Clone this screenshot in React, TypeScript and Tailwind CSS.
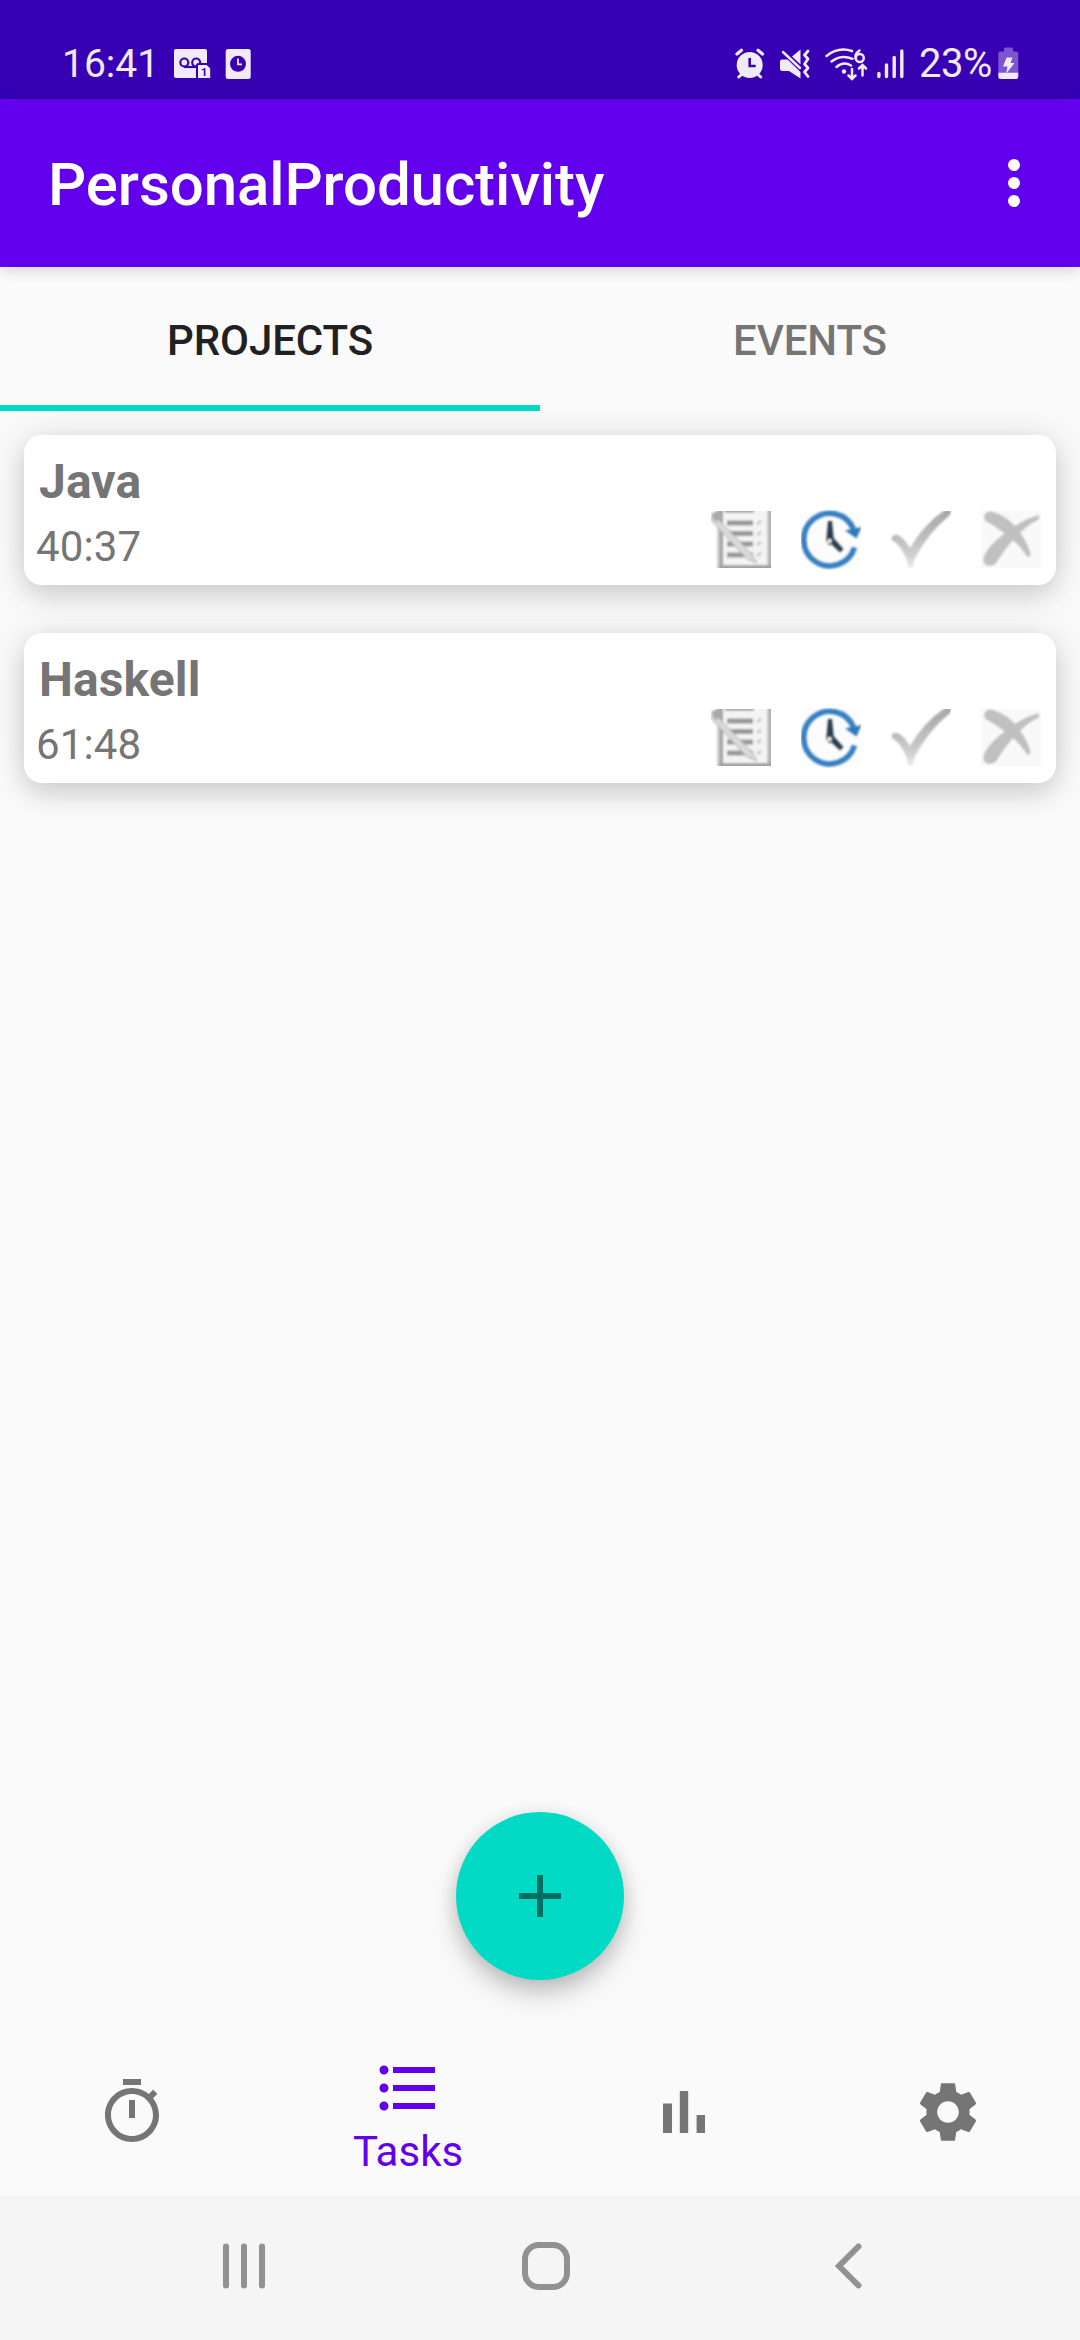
import type { ReactNode } from "react";

const LIGHT = "#f1eafc";
const DARK = "#3700b3";

function StatusBar() {
  return (
    <div className="flex h-[99px] shrink-0 items-start bg-[#3700b3] text-[#f1eafc]">
      <div className="ml-[62px] mt-[40px] w-[112px] text-[39px] leading-[48px]">16:41</div>
      <svg className="mt-[48px]" width="37" height="32" viewBox="0 -1 37 32">
        <rect width="33" height="29" rx="2" fill={LIGHT} />
        <g fill="none" stroke={DARK} strokeWidth="2.2">
          <circle cx="10.3" cy="13.5" r="4" />
          <circle cx="22.2" cy="13.5" r="4" />
          <path d="M10 18h13" />
        </g>
        <path d="M24 15h8.500l4.500 4v11H23V16z" fill={LIGHT} stroke={DARK} strokeWidth="2" />
        <rect x="33.200" y="-1" width="4" height="14" fill={DARK} />
        <path d="M24.500 16h8l3.700 3.500V29H24.500z" fill={LIGHT} />
        <text x="27" y="26.500" fontSize="11" fontWeight="700" fontFamily="Roboto" fill={DARK}>1</text>
      </svg>
      <svg className="ml-[14px] mt-[48px]" width="26" height="32" viewBox="0 -1 26 32">
        <rect x="0.700" width="25" height="30" rx="2.500" fill={LIGHT} />
        <circle cx="13" cy="14.800" r="8" fill={DARK} />
        <path d="M13 9.500v5.800h4" fill="none" stroke={LIGHT} strokeWidth="1.800" />
      </svg>
      <svg className="ml-[484px] mt-[48px]" width="30" height="31" viewBox="0 0 30 31">
        <g stroke={LIGHT} strokeLinecap="round" fill="none">
          <path d="M2 6l4.500-3.800M27.500 6l-4.500-3.800" strokeWidth="3.200" />
          <path d="M7 26l-3.200 3M22.500 26l3.200 3" strokeWidth="3" />
        </g>
        <circle cx="14.700" cy="17" r="13" fill={LIGHT} />
        <path d="M14.700 10v8h6" fill="none" stroke={DARK} strokeWidth="2.600" />
      </svg>
      <svg className="ml-[15px] mt-[48px]" width="31" height="32" viewBox="0 0 31 32">
        <path d="M0 13.500q0-2 2-2h5.500L20.500 24v6.500L9 23H2q-2 0-2-2z" fill={LIGHT} />
        <path d="M12 8.500L20.500 1.500v15z" fill={LIGHT} />
        <path d="M3 4L20 20" stroke={LIGHT} strokeWidth="2.500" strokeLinecap="round" />
        <path d="M28 3l-3.500 4 3.500 4-3.500 5 3.500 4-3.500 4 3.500 4.500" fill="none" stroke={LIGHT} strokeWidth="2.800" strokeLinecap="round" strokeLinejoin="round" />
      </svg>
      <svg className="ml-[14px] mt-[46px]" width="43" height="36" viewBox="0 0 43 36">
        <g fill="none" stroke={LIGHT} strokeWidth="2.500" strokeLinecap="round">
          <path d="M1.500 10Q13 .5 27 5" />
          <path d="M6.500 15.500Q16 8 27.500 12.800" />
          <path d="M11.500 21Q18.500 15 26 19.500" />
          <path d="M34.500 4.500Q29.500 8 30.600 12.500" />
          <circle cx="34.800" cy="12" r="4" />
          <path d="M27 23v9.500M23.500 29.500l3.500 3.500 3.500-3.500M37.500 29.500v-9.500M34 22.500l3.500-3.500 3.500 3.500" />
        </g>
        <circle cx="19" cy="25.500" r="2.200" fill={LIGHT} />
      </svg>
      <svg className="ml-[9px] mt-[48px]" width="28" height="31" viewBox="0 0 28 31">
        <path d="M1.900 25.500v3M9.500 17v11.500M17.200 9.500v19M24.800 3v25.500" stroke={LIGHT} strokeWidth="3.400" strokeLinecap="round" />
      </svg>
      <div className="ml-[14px] mt-[40px] w-[79px] text-[40px] leading-[48px] tracking-[-0.5px]">23%</div>
      <svg className="mt-[46px]" width="21" height="33" viewBox="0 0 21 33">
        <path d="M6 5.500V3q0-1.500 1.500-1.500h6q1.500 0 1.500 1.500v2.500h3q2.300 0 2.300 2.300V27H.3V7.800q0-2.300 2.300-2.300z" fill="#7d56cf" />
        <path d="M.3 26.700h20v4q0 2.300-2.300 2.300H2.600Q.3 33 .3 30.700z" fill={LIGHT} />
        <path d="M8.500 11.500h6l-2 5.500h4L8 28l1.500-7.500H5z" fill={LIGHT} />
      </svg>
    </div>
  );
}

function Tab({ label, active = false }: { label: string; active?: boolean }) {
  return (
    <div className="flex flex-1 flex-col">
      <div className={active ? "flex flex-1 items-center justify-center text-[#212121]" : "flex flex-1 items-center justify-center text-[#757575]"}>
        <span className="mt-[10px] text-[42px] font-medium leading-[50px] tracking-[-0.1px]">{label}</span>
      </div>
      <div className={active ? "h-[6px] bg-[#03dac5]" : "h-[6px]"} />
    </div>
  );
}

function NoteIcon() {
  return (
    <svg width="60" height="60" viewBox="0 0 60 60">
      <defs>
        <linearGradient id="edge" x1="0" x2="1">
          <stop offset="0" stopColor="#dcdcdc" />
          <stop offset="1" stopColor="#8c8c8c" />
        </linearGradient>
        <filter id="soft"><feGaussianBlur stdDeviation="0.900" /></filter>
        <clipPath id="frame"><rect y="1" width="60" height="57" /></clipPath>
      </defs>
      <g clipPath="url(#frame)"><g filter="url(#soft)">
        <rect x="7" y="-2" width="55" height="61" fill="#f4f4f4" />
        <rect x="6" y="-2" width="6" height="61" fill="url(#edge)" />
        <rect x="56.500" y="-2" width="6" height="62" fill="#b4b4b4" />
        <rect x="8" y="55" width="54" height="6" fill="#a2a2a2" />
        <path d="M14 1h29" stroke="#8e8e8e" strokeWidth="3" />
        <path d="M16 13h26M16 23.500h26M16 34h26M16 45h26" stroke="#979797" strokeWidth="4.800" />
        <path d="M46 14l4-3M46 25l4-3M46 35l4-3M46 46l4-3" stroke="#c4c4c4" strokeWidth="2.500" />
        <path d="M3 5L40 43L46 53L36 49L-1 9z" fill="#d9d9d9" stroke="#b0b0b0" strokeWidth="1" />
        <path d="M0 4l8-4 4 8-8 4z" fill="#aaa" />
      </g></g>
    </svg>
  );
}

function HistoryIcon() {
  return (
    <svg width="60" height="60" viewBox="0 0 60 60">
      <rect y="1" width="60" height="57" fill="#fcfcfc" />
      <g filter="url(#soft)">
        <path d="M53.500 37.500A26 26.300 0 1 1 52.500 19" fill="none" stroke="#377fc2" strokeWidth="5.600" />
        <path d="M44 20.500L60.500 17L55.500 28.500z" fill="#2f78bd" />
        <path d="M27 11h4l2 20-4.500 4.500-3.200-5z" fill="#2b3d4d" />
        <path d="M29 33l3.500-5 10 11-3.500 3.500z" fill="#2b3d4d" />
        <circle cx="28.700" cy="31" r="2" fill="#fff" />
      </g>
    </svg>
  );
}

function CheckIcon() {
  return (
    <svg width="60" height="60" viewBox="0 0 60 60">
      <defs>
        <linearGradient id="tick" x1="0" y1="0" x2="0" y2="1">
          <stop offset="0" stopColor="#a6a6a6" />
          <stop offset="0.600" stopColor="#c4c4c4" />
          <stop offset="0.800" stopColor="#d2d2d2" />
          <stop offset="1" stopColor="#ececec" />
        </linearGradient>
      </defs>
      <g clipPath="url(#frame)">
        <path filter="url(#soft)" d="M.5 27Q3 24 7 25Q13 28 19 38Q33 14 54 0H61Q61 2 58 6Q38 22 24 48Q22 52 22 58H17Q17 50 12 42Q7 33 .5 30z" fill="url(#tick)" />
      </g>
    </svg>
  );
}

function CrossIcon() {
  return (
    <svg width="60" height="60" viewBox="0 0 60 60">
      <rect y="1" width="60" height="57" fill="#f9f9f9" />
      <g fill="#c0c0c0" filter="url(#soft)">
        <path d="M3 7Q5 0 12 2Q28 7 37 20Q46 31 49.500 44Q49 49 45.500 45.500Q38 34 28 27Q16 17 4.500 11z" />
        <path d="M57 5.500Q60 8 56 10.500Q46 15 36 26Q25 37 16.500 51Q13 57 6.500 55.500Q0 53 4 44Q11 32 26 22Q40 10 57 5.500z" />
      </g>
    </svg>
  );
}

function ProjectCard({ name, time }: { name: string; time: string }) {
  return (
    <div className="flex h-[150px] justify-between rounded-[18px] bg-white pr-[15px] text-[#757575] shadow-[0_10px_26px_rgba(0,0,0,0.14),0_2px_42px_rgba(0,0,0,0.09)]">
      <div className="flex flex-col pl-[12px]">
        <div className="mt-[19px] pl-[3px] text-[48px] font-bold leading-[56px] tracking-[0.1px]">{name}</div>
        <div className="mt-[12px] text-[42px] leading-[50px] tracking-[0.1px]">{time}</div>
      </div>
      <div className="mb-[15px] flex items-end gap-[30px]">
        <NoteIcon />
        <HistoryIcon />
        <CheckIcon />
        <CrossIcon />
      </div>
    </div>
  );
}

function NavIcon({ children }: { children: ReactNode }) {
  return (
    <svg width="72" height="72" viewBox="0 0 24 24" fill="currentColor">
      {children}
    </svg>
  );
}

function BottomNav() {
  return (
    <div className="flex h-[168px] shrink-0 text-[#757575]">
      <div className="flex w-[264px] justify-center pt-[48px]">
        <NavIcon>
          <path d="M15 1H9v2h6V1zm-4 13h2V8h-2v6zm8.030-6.610 1.420-1.420c-.43-.51-.9-.99-1.410-1.410l-1.420 1.420C16.070 4.740 14.120 4 12 4c-4.970 0-9 4.030-9 9s4.020 9 9 9 9-4.030 9-9c0-2.120-.74-4.070-1.970-5.610zM12 20c-3.870 0-7-3.130-7-7s3.130-7 7-7 7 3.130 7 7-3.130 7-7 7z" />
        </NavIcon>
      </div>
      <div className="flex w-[288px] flex-col items-center pt-[24px] text-[#6200ee]">
        <NavIcon>
          <path d="M4 10.500c-.83 0-1.500.67-1.500 1.500s.67 1.500 1.500 1.500 1.500-.67 1.500-1.500-.67-1.500-1.500-1.500zm0-6c-.83 0-1.500.67-1.500 1.500S3.170 7.500 4 7.500 5.500 6.830 5.500 6 4.830 4.500 4 4.500zm0 12c-.83 0-1.500.68-1.500 1.500s.68 1.500 1.500 1.500 1.500-.68 1.500-1.500-.67-1.500-1.500-1.500zM7 19h14v-2H7v2zm0-6h14v-2H7v2zm0-8v2h14V5H7z" />
        </NavIcon>
        <div className="mt-[3px] text-[42px] leading-[50px]">Tasks</div>
      </div>
      <div className="flex w-[264px] justify-center pt-[48px]">
        <NavIcon>
          <path d="M5 9.200h3V19H5zM10.600 5h2.800v14h-2.800zm5.600 8H19v6h-2.800z" />
        </NavIcon>
      </div>
      <div className="flex w-[264px] justify-center pt-[48px]">
        <NavIcon>
          <path d="M19.140 12.940c.04-.3.060-.61.060-.94 0-.32-.02-.64-.07-.94l2.030-1.580c.18-.14.230-.41.120-.61l-1.920-3.320c-.12-.22-.37-.29-.59-.22l-2.390.96c-.5-.38-1.030-.7-1.620-.94l-.36-2.540c-.04-.24-.24-.41-.48-.41h-3.840c-.24 0-.43.170-.47.410l-.36 2.540c-.59.240-1.130.570-1.620.940l-2.390-.96c-.22-.08-.47 0-.59.220L2.740 8.870c-.12.210-.08.470.120.610l2.030 1.580c-.05.300-.09.630-.09.940s.020.640.070.940l-2.030 1.580c-.18.140-.23.410-.12.610l1.920 3.320c.12.220.37.290.59.220l2.390-.96c.5.380 1.030.7 1.620.94l.36 2.540c.05.240.24.410.48.410h3.840c.24 0 .44-.17.470-.41l.36-2.540c.59-.24 1.130-.56 1.620-.94l2.390.96c.22.080.47 0 .59-.22l1.920-3.320c.12-.22.070-.47-.12-.61l-2.010-1.580zM12 15.600c-1.980 0-3.600-1.620-3.600-3.600s1.620-3.600 3.600-3.600 3.600 1.620 3.600 3.600-1.620 3.600-3.600 3.600z" />
        </NavIcon>
      </div>
    </div>
  );
}

function SystemNav() {
  return (
    <div className="flex h-[144px] shrink-0 items-center bg-[#f5f5f5] pb-[4px]">
      <svg className="ml-[222px]" width="44" height="50" viewBox="0 0 44 50" stroke="#919191" strokeWidth="6" strokeLinecap="round">
        <path d="M4 5.500v39M22 5.500v39M40 5.500v39" />
      </svg>
      <svg className="ml-[255px]" width="50" height="50" viewBox="0 0 50 50" fill="none" stroke="#919191" strokeWidth="6">
        <rect x="4" y="4" width="42" height="42" rx="14" />
      </svg>
      <svg className="ml-[261px]" width="32" height="50" viewBox="0 0 32 50" fill="none" stroke="#919191" strokeWidth="6" strokeLinecap="round">
        <path d="M26.500 5.500L7 25l19.500 19.500" />
      </svg>
    </div>
  );
}

export default function App() {
  return (
    <div className="flex h-[2340px] w-[1080px] flex-col overflow-hidden bg-[#fafafa] font-['Roboto',sans-serif]">
      <StatusBar />
      <header className="z-10 flex h-[168px] shrink-0 items-center justify-between bg-[#6200ee] pl-[48px] pr-[60px] text-white shadow-[0_3px_14px_rgba(0,0,0,0.16)]">
        <h1 className="mt-[4px] text-[60px] font-medium leading-[70px] tracking-[-0.1px]">PersonalProductivity</h1>
        <svg width="12" height="48" viewBox="0 0 12 48" fill="#fff">
          <circle cx="6" cy="6" r="6" />
          <circle cx="6" cy="24" r="6" />
          <circle cx="6" cy="42" r="6" />
        </svg>
      </header>
      <div className="flex h-[144px] shrink-0">
        <Tab label="PROJECTS" active />
        <Tab label="EVENTS" />
      </div>
      <main className="flex flex-1 flex-col gap-[48px] overflow-hidden px-[24px] pb-[48px] pt-[24px]">
        <ProjectCard name="Java" time="40:37" />
        <ProjectCard name="Haskell" time="61:48" />
        <button className="mt-auto flex size-[168px] items-center justify-center self-center rounded-full bg-[#03dac5] shadow-[0_14px_26px_rgba(0,0,0,0.21),0_2px_18px_rgba(0,0,0,0.09)]">
          <svg width="72" height="72" viewBox="0 0 24 24" fill="#026e63">
            <path d="M19 13h-6v6h-2v-6H5v-2h6V5h2v6h6v2z" />
          </svg>
        </button>
      </main>
      <BottomNav />
      <SystemNav />
    </div>
  );
}
